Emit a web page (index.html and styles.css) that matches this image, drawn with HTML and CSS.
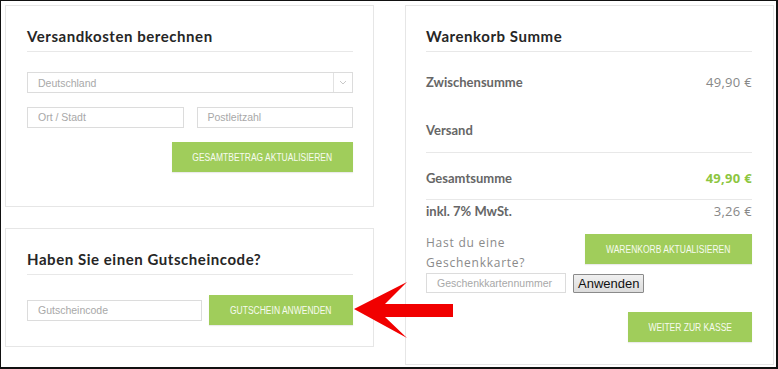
FILE: index.html
```html
<!DOCTYPE html>
<html lang="de">
<head>
<meta charset="utf-8">
<link rel="stylesheet" href="styles.css">
</head>
<body>
<div class="frame">
  <div class="col-left">
    <section class="panel panel-ship">
      <h2 class="title">Versandkosten berechnen</h2>
      <div class="select">
        <span class="select-text">Deutschland</span>
        <span class="select-arrow"><svg width="8" height="5" viewBox="0 0 8 5"><path d="M1 1 L4 4 L7 1" fill="none" stroke="#c8c8c8" stroke-width="1"/></svg></span>
      </div>
      <div class="row-two">
        <div class="input">Ort / Stadt</div>
        <div class="input">Postleitzahl</div>
      </div>
      <div class="row-right">
        <div class="btn btn-ship"><span class="btn-label">GESAMTBETRAG AKTUALISIEREN</span></div>
      </div>
    </section>
    <section class="panel panel-coupon">
      <h2 class="title">Haben Sie einen Gutscheincode?</h2>
      <div class="coupon-row">
        <div class="input input-coupon">Gutscheincode</div>
        <div class="btn btn-coupon"><span class="btn-label">GUTSCHEIN ANWENDEN</span></div>
      </div>
    </section>
  </div>
  <section class="panel panel-total">
    <h2 class="title">Warenkorb Summe</h2>
    <div class="trow trow-sub"><span class="lbl">Zwischensumme</span><span class="val">49,90 €</span></div>
    <div class="trow trow-ship"><span class="lbl">Versand</span></div>
    <div class="trow trow-total"><span class="lbl">Gesamtsumme</span><span class="val val-green">49,90 €</span></div>
    <div class="trow trow-tax"><span class="lbl">inkl. 7% MwSt.</span><span class="val">3,26 €</span></div>
    <div class="gift">
      <div class="gift-q">Hast du eine<br>Geschenkkarte?</div>
      <div class="btn btn-cart"><span class="btn-label">WARENKORB AKTUALISIEREN</span></div>
    </div>
    <div class="gift-row">
      <div class="input input-gift">Geschenkkartennummer</div>
      <div class="btn-native">Anwenden</div>
    </div>
    <div class="row-right checkout">
      <div class="btn btn-checkout"><span class="btn-label">WEITER ZUR KASSE</span></div>
    </div>
  </section>
  <svg class="arrow" width="100" height="60" viewBox="0 0 100 60">
    <polygon points="0,27 53,0 31,22 99,22 99,35 31,35 53,56" fill="#f10000"/>
  </svg>
</div>
</body>
</html>
```

FILE: styles.css
```css
* { box-sizing: border-box; }
html, body { margin: 0; padding: 0; background: #fff; }
.frame {
  position: relative;
  width: 778px;
  height: 369px;
  border: 2px solid #111;
  border-top-width: 1px;
  border-left-width: 1px;
  padding: 4px 2px 2px 4px;
  display: flex;
  gap: 31px;
  font-family: "Liberation Sans", Arial, sans-serif;
}
.col-left {
  width: 369px;
  display: flex;
  flex-direction: column;
  gap: 21px;
}
.panel {
  border: 1px solid #e6e6e6;
  background: #fff;
  padding: 19px 20px 0 21px;
}
.panel-ship { height: 202px; }
.panel-coupon { height: 119px; }
.panel-total { width: 369px; height: 360px; padding: 19px 21px 0 20px; }
.title {
  margin: 0;
  font-family: "Lato", sans-serif;
  font-weight: 700;
  font-size: 15px;
  letter-spacing: 0.55px;
  line-height: 22px;
  color: #262626;
  padding-bottom: 4px;
  border-bottom: 1px solid #e8e8e8;
}
.select {
  margin-top: 20px;
  height: 21px;
  border: 1px solid #dcdcdc;
  display: flex;
  align-items: center;
}
.select-text {
  flex: 1;
  padding-left: 10px;
  font-size: 10.5px;
  color: #a8a8a8;
}
.select-arrow {
  width: 19px;
  height: 100%;
  border-left: 1px solid #e2e2e2;
  display: flex;
  align-items: center;
  justify-content: center;
}
.input {
  height: 21px;
  border: 1px solid #dcdcdc;
  padding-left: 10px;
  font-size: 10.5px;
  line-height: 19px;
  color: #a8a8a8;
}
.row-two {
  margin-top: 14px;
  display: flex;
  gap: 13px;
}
.row-two .input { flex: 1; }
.row-right { display: flex; justify-content: flex-end; }
.panel-ship .row-right { margin-top: 14px; }
.btn {
  height: 30px;
  background: #a0cd5b;
  color: #f7fbf0;
  font-family: "Liberation Sans", Arial, sans-serif;
  font-size: 10px;
  display: flex;
  align-items: center;
  justify-content: center;
  box-shadow: 0 1px 1px rgba(0,0,0,0.08);
  white-space: nowrap;
}
.btn-label {
  display: inline-block;
  transform: scaleX(0.85);
}
.btn-ship { width: 181px; }
.coupon-row {
  margin-top: 20px;
  display: flex;
  align-items: center;
  gap: 7px;
}
.input-coupon { width: 175px; }
.btn-coupon { width: 144px; }
.trow {
  display: flex;
  justify-content: space-between;
  align-items: center;
  line-height: 20px;
}
.trow-sub { height: 60px; }
.trow-ship { height: 41px; padding-bottom: 5px; border-bottom: 1px solid #e8e8e8; }
.trow-total { height: 47px; padding-top: 3px; border-bottom: 1px solid #e8e8e8; }
.trow-tax { height: 22px; }
.lbl {
  font-family: "Lato", sans-serif;
  font-weight: 700;
  font-size: 13px;
  color: #666;
}
.val {
  font-family: "Open Sans", sans-serif;
  font-size: 13px;
  color: #888;
  letter-spacing: 0.3px;
}
.val-green { color: #8dc63f; font-weight: 700; }
.gift {
  margin-top: 11px;
  display: flex;
  justify-content: space-between;
  align-items: flex-start;
}
.gift-q {
  font-family: "Open Sans", sans-serif;
  font-size: 12px;
  letter-spacing: 0.75px;
  line-height: 20px;
  color: #8a8a8a;
}
.btn-cart { width: 167px; margin-top: 1px; }
.gift-row {
  display: flex;
  align-items: center;
  gap: 7px;
}
.input-gift { width: 140px; height: 20px; line-height: 18px; }
.btn-native {
  height: 19px;
  padding: 0 4px;
  border: 1px solid #8a8a8a;
  border-radius: 1px;
  background: linear-gradient(#f0f0f0, #dcdcdc);
  font-family: "Liberation Sans", Arial, sans-serif;
  font-size: 13px;
  line-height: 17px;
  color: #111;
}
.checkout { margin-top: 19px; }
.btn-checkout { width: 124px; }
.arrow {
  position: absolute;
  left: 353px;
  top: 281px;
}
```
